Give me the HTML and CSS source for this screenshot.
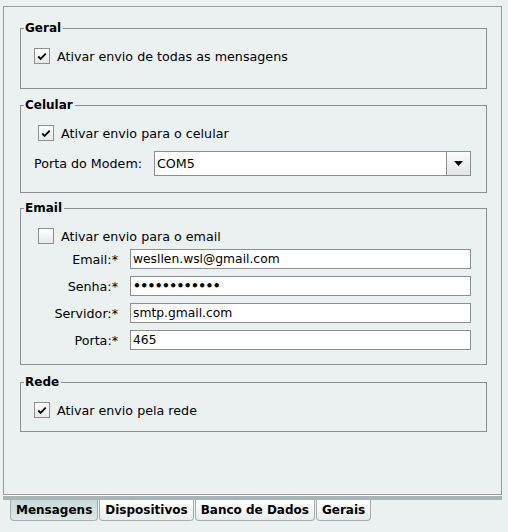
FILE: index.html
```html
<!DOCTYPE html>
<html lang="pt">
<head>
<meta charset="utf-8">
<title>Configurações</title>
<link rel="stylesheet" href="styles.css">
</head>
<body>
<div class="window">
  <div class="panel">
    <fieldset class="group geral">
      <legend>Geral</legend>
      <label class="check">
        <span class="box"><svg viewBox="0 0 15 15" width="15" height="15"><path d="M3.5 7.5 L6 10 L11.5 4.5" fill="none" stroke="#000" stroke-width="2"/></svg></span>
        <span>Ativar envio de todas as mensagens</span>
      </label>
    </fieldset>

    <fieldset class="group celular">
      <legend>Celular</legend>
      <label class="check indent">
        <span class="box"><svg viewBox="0 0 15 15" width="15" height="15"><path d="M3.5 7.5 L6 10 L11.5 4.5" fill="none" stroke="#000" stroke-width="2"/></svg></span>
        <span>Ativar envio para o celular</span>
      </label>
      <div class="modem-row">
        <span class="modem-label">Porta do Modem:</span>
        <div class="combo">
          <span class="combo-value">COM5</span>
          <span class="combo-btn"><svg viewBox="0 0 9 5" width="9" height="5"><path d="M0 0 H9 L4.5 5 Z" fill="#000"/></svg></span>
        </div>
      </div>
    </fieldset>

    <fieldset class="group email">
      <legend>Email</legend>
      <label class="check indent">
        <span class="box"></span>
        <span>Ativar envio para o email</span>
      </label>
      <div class="form">
        <span class="flabel">Email:*</span><div class="field">wesllen.wsl@gmail.com</div>
        <span class="flabel">Senha:*</span><div class="field pass">••••••••••••</div>
        <span class="flabel">Servidor:*</span><div class="field">smtp.gmail.com</div>
        <span class="flabel">Porta:*</span><div class="field">465</div>
      </div>
    </fieldset>

    <fieldset class="group rede">
      <legend>Rede</legend>
      <label class="check">
        <span class="box"><svg viewBox="0 0 15 15" width="15" height="15"><path d="M3.5 7.5 L6 10 L11.5 4.5" fill="none" stroke="#000" stroke-width="2"/></svg></span>
        <span>Ativar envio pela rede</span>
      </label>
    </fieldset>
  </div>
  <div class="tabbar">
    <div class="tab active">Mensagens</div>
    <div class="tab">Dispositivos</div>
    <div class="tab">Banco de Dados</div>
    <div class="tab">Gerais</div>
  </div>
</div>
</body>
</html>
```

FILE: styles.css
```css
* { box-sizing: border-box; }
html, body {
  margin: 0;
  background: #ebf0f0;
}
body {
  font-family: "DejaVu Sans", Verdana, sans-serif;
  font-size: 12.7px;
  color: #000;
}
.window {
  width: 508px;
  height: 532px;
  padding: 6px 0 0 3px;
}
.panel {
  width: 499px;
  height: 489px;
  border: 1px solid #9a9a9a;
  padding: 14px 14px 0 16px;
  box-shadow: 0 1px 0 #ffffff;
}
.group {
  margin: 0;
  padding: 0;
  border: 1px solid #8e8e8e;
  min-width: 0;
}
.group legend {
  font-size: 12px;
  font-weight: bold;
  margin-left: 3px;
  padding: 0 2px 0 1px;
  line-height: 14px;
}
.geral { height: 68px; }
.celular { height: 95px; margin-top: 9px; }
.email { height: 164px; margin-top: 8px; }
.rede { height: 57px; margin-top: 10px; }

.check {
  display: flex;
  align-items: center;
  gap: 7px;
  margin: 13px 0 0 13px;
  height: 16px;
}
.check.indent { margin-left: 17px; }
.box {
  width: 16px;
  height: 16px;
  border: 1px solid #8f8f8f;
  background: linear-gradient(#ffffff, #e6e9e9);
  display: flex;
  align-items: center;
  justify-content: center;
}
.box svg { display: block; }

.modem-row {
  display: flex;
  align-items: center;
  margin: 10px 0 0 13px;
}
.modem-label { width: 120px; }
.combo {
  width: 317px;
  height: 25px;
  border: 1px solid #8e8e8e;
  background: #fff;
  display: flex;
  align-items: center;
}
.combo-value { flex: 1; padding-left: 2px; }
.combo-btn {
  width: 24px;
  height: 100%;
  border-left: 1px solid #8e8e8e;
  background: linear-gradient(#fbfbfb, #e3e6e6);
  display: flex;
  align-items: center;
  justify-content: center;
}
.combo-btn svg { display: block; }

.form {
  display: grid;
  grid-template-columns: 97px 341px;
  column-gap: 12px;
  row-gap: 7px;
  margin-top: 5px;
}
.flabel {
  text-align: right;
  align-self: center;
}
.field {
  height: 20px;
  border: 1px solid #8e8e8e;
  background: #fff;
  padding-left: 2px;
  display: flex;
  align-items: center;
  font-size: 12.3px;
}
.field.pass { letter-spacing: -0.6px; font-weight: bold; }

.tabbar {
  width: 499px;
  margin-top: 1px;
  border-top: 4px solid #a6b6b6;
  display: flex;
  padding-left: 7px;
}
.tab {
  height: 21px;
  padding: 0 5px;
  border: 1px solid #a9acac;
  border-top: none;
  border-radius: 0 0 4px 4px;
  background: linear-gradient(#ffffff, #e8ecec);
  font-size: 12px;
  font-weight: bold;
  display: flex;
  align-items: center;
  margin-right: 1px;
}
.tab.active {
  background: linear-gradient(#c9d9d9, #dde7e7);
}
```
